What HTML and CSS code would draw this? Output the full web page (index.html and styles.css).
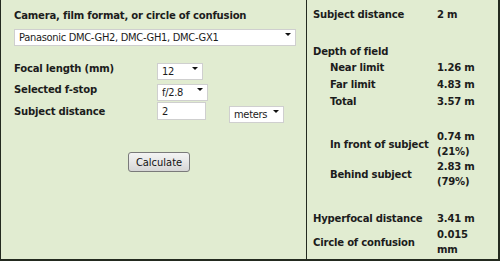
FILE: index.html
```html
<!DOCTYPE html>
<html>
<head>
<meta charset="utf-8">
<link rel="stylesheet" href="styles.css">
</head>
<body>
<div class="calc">
  <div class="left">
    <div class="title">Camera, film format, or circle of confusion</div>
    <span class="sel wide"><select><option>Panasonic DMC-GH2, DMC-GH1, DMC-GX1</option></select></span>
    <div class="row r1">
      <span class="lbl">Focal length (mm)</span>
      <span class="sel w45"><select><option>12</option></select></span>
    </div>
    <div class="row r2">
      <span class="lbl">Selected f-stop</span>
      <span class="sel w50"><select><option>f/2.8</option></select></span>
    </div>
    <div class="row r3">
      <span class="lbl">Subject distance</span>
      <input class="inp" type="text" value="2">
      <span class="sel w54"><select><option>meters</option></select></span>
    </div>
    <button class="btn">Calculate</button>
  </div>
  <div class="right">
    <div class="res h17 m6"><span class="k">Subject distance</span><span class="v">2 m</span></div>
    <div class="res h16 m20"><span class="k">Depth of field</span><span class="v"></span></div>
    <div class="res h17"><span class="k sub">Near limit</span><span class="v">1.26 m</span></div>
    <div class="res h17"><span class="k sub">Far limit</span><span class="v">4.83 m</span></div>
    <div class="res h17"><span class="k sub">Total</span><span class="v">3.57 m</span></div>
    <div class="res h30 m19"><span class="k sub">In front of subject</span><span class="v">0.74 m<br>(21%)</span></div>
    <div class="res h30"><span class="k sub">Behind subject</span><span class="v">2.83 m<br>(79%)</span></div>
    <div class="res h17 m21"><span class="k">Hyperfocal distance</span><span class="v">3.41 m</span></div>
    <div class="res h30"><span class="k">Circle of confusion</span><span class="v">0.015<br>mm</span></div>
  </div>
</div>
</body>
</html>
```
FILE: styles.css
```css
html, body {
  margin: 0;
  padding: 0;
  background: #ffffff;
}
.calc {
  width: 500px;
  height: 261px;
  box-sizing: border-box;
  background: #e1ecd1;
  border-left: 1px solid #232a1f;
  border-right: 2px solid #232a1f;
  border-bottom: 2px solid #232a1f;
  display: flex;
  font-family: "DejaVu Sans Condensed", "DejaVu Sans", sans-serif;
  color: #1c1c1c;
}
.left {
  width: 306px;
  border-right: 1px solid #232a1f;
  padding: 8px 0 0 13px;
  box-sizing: border-box;
  display: flex;
  flex-direction: column;
  align-items: flex-start;
}
.title {
  font-weight: bold;
  font-size: 11.2px;
  letter-spacing: -0.2px;
  line-height: 15px;
  height: 15px;
  margin-bottom: 3px;
}
.sel {
  position: relative;
  display: inline-block;
  height: 17px;
}
.sel select {
  appearance: none;
  -webkit-appearance: none;
  width: 100%;
  height: 100%;
  box-sizing: border-box;
  border: 1px solid #cfcfcf;
  border-radius: 0;
  background: #ffffff;
  font-family: "DejaVu Sans Condensed", "DejaVu Sans", sans-serif;
  font-size: 11px;
  letter-spacing: -0.3px;
  color: #1c1c1c;
  padding: 0 0 0 4px;
  margin: 0;
  outline: none;
}
.sel::after {
  content: "";
  position: absolute;
  right: 5px;
  top: 7px;
  border-left: 3px solid transparent;
  border-right: 3px solid transparent;
  border-top: 3px solid #111;
  pointer-events: none;
}
.wide { width: 282px; }
.w45 { width: 46px; }
.w50 { width: 51px; }
.w54 { width: 55px; }
.row {
  display: flex;
  align-items: center;
}
.r1 { margin-top: 17px; height: 17px; }
.r2 { margin-top: 4px; height: 17px; }
.r3 { margin-top: 4px; height: 18px; }
.lbl {
  width: 143px;
  font-weight: bold;
  font-size: 11.2px;
  letter-spacing: -0.2px;
  line-height: 15px;
}
.inp {
  width: 49px;
  height: 18px;
  box-sizing: border-box;
  border: 1px solid #cfcfcf;
  background: #fff;
  font-family: "DejaVu Sans Condensed", "DejaVu Sans", sans-serif;
  font-size: 11px;
  color: #1c1c1c;
  padding: 0 0 0 4px;
  margin: 0 23px 0 0;
  outline: none;
}
.btn {
  margin: 32px 0 0 114px;
  width: 62px;
  height: 20px;
  box-sizing: border-box;
  border: 1px solid #7a7a7a;
  border-radius: 3px;
  background: linear-gradient(#f4f4f4, #e6e6e6 50%, #d6d6d6);
  font-family: "DejaVu Sans Condensed", "DejaVu Sans", sans-serif;
  font-size: 11px;
  color: #111;
  padding: 0;
}
.right {
  flex: 1;
  padding-left: 6px;
  box-sizing: border-box;
}
.res {
  display: flex;
  align-items: center;
  font-weight: bold;
  font-size: 11.2px;
  letter-spacing: -0.2px;
  line-height: 15px;
}
.k { width: 124px; }
.k.sub { padding-left: 17px; box-sizing: border-box; }
.v { width: 50px; }
.h16 { height: 16px; }
.h17 { height: 17px; }
.h30 { height: 30px; }
.m6 { margin-top: 6px; }
.m19 { margin-top: 19px; }
.m20 { margin-top: 20px; }
.m21 { margin-top: 21px; }
```
